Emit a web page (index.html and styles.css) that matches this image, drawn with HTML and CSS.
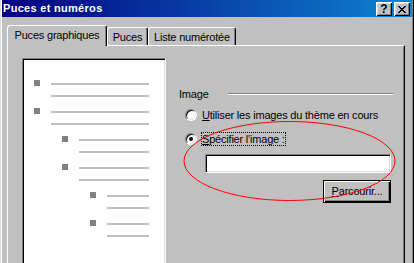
FILE: index.html
```html
<!DOCTYPE html>
<html lang="fr">

<head>
    <meta charset="UTF-8">
    <meta name="viewport" content="width=device-width, initial-scale=1.0">
    <title>Puces et numéros</title>
    <link rel="stylesheet" href="styles.css">
</head>

<body>
    <div class="window">
        <div class="titlebar">
            <span class="title">Puces et numéros</span>
            <div class="title-buttons">
                <button class="title-btn">?</button>
                <button class="title-btn">
                    <svg width="8" height="7" viewBox="0 0 8 7" shape-rendering="crispEdges">
                        <path fill="#000" d="M0 0h2v1H0z M6 0h2v1H6z M1 1h2v1H1z M5 1h2v1H5z M2 2h4v1H2z M3 3h2v1H3z M2 4h4v1H2z M1 5h2v1H1z M5 5h2v1H5z M0 6h2v1H0z M6 6h2v1H6z" />
                    </svg>
                </button>
            </div>
        </div>

        <div class="tabs">
            <div class="tab active">Puces graphiques</div>
            <div class="tab tab-puces">Puces</div>
            <div class="tab tab-liste">Liste numérotée</div>
        </div>

        <div class="panel">
            <!-- bullet preview -->
            <div class="preview">
                <div class="item level-0"><span class="bullet"></span><div class="lines"><div class="line"></div><div class="line"></div></div></div>
                <div class="item level-0"><span class="bullet"></span><div class="lines"><div class="line"></div><div class="line"></div></div></div>
                <div class="item level-1"><span class="bullet"></span><div class="lines"><div class="line"></div><div class="line"></div></div></div>
                <div class="item level-1"><span class="bullet"></span><div class="lines"><div class="line"></div><div class="line"></div></div></div>
                <div class="item level-2"><span class="bullet"></span><div class="lines"><div class="line"></div><div class="line"></div></div></div>
                <div class="item level-2"><span class="bullet"></span><div class="lines"><div class="line"></div><div class="line"></div></div></div>
            </div>

            <div class="options">
                <div class="group-header">
                    <span>Image</span>
                    <div class="etched"></div>
                </div>
                <label class="radio-row">
                    <span class="radio"></span>
                    <span class="radio-label"><u>U</u>tiliser les images du thème en cours</span>
                </label>
                <label class="radio-row second">
                    <span class="radio checked"></span>
                    <span class="radio-label focused"><u>S</u>pécifier l'image :</span>
                </label>
                <input class="path-input" type="text">
                <button class="browse-btn"><u>P</u>arcourir...</button>
            </div>
        </div>

        <!-- red hand drawn circle -->
        <svg class="annotation" width="414" height="263" viewBox="0 0 414 263">
            <ellipse cx="289.5" cy="161" rx="105.5" ry="39.5" fill="none" stroke="#ff0000" stroke-width="1" />
        </svg>
    </div>
</body>

</html>
```

FILE: styles.css
```css
body {
    margin: 0;
    background-color: #c0c0c0;
    font-family: "Liberation Sans", Arial, sans-serif;
    font-size: 11px;
    letter-spacing: -0.2px;
    color: #000;
}

.window {
    position: relative;
    width: 414px;
    height: 263px;
    box-sizing: border-box;
    overflow: hidden;
    background-color: #c0c0c0;
    border-left: 1px solid #dfdfdf;
    border-right: 1px solid #000;
    padding: 0 1px;
    box-shadow: inset 1px 0 #fff, inset -1px 0 #808080;
}

.titlebar {
    display: flex;
    height: 17px;
    background: linear-gradient(to right, #000080, #1084d0);
}

.title {
    padding-left: 1px;
    line-height: 17px;
    font-weight: bold;
    letter-spacing: 0.3px;
    color: #fff;
}

.title-buttons {
    display: flex;
    gap: 2px;
    margin-left: auto;
    padding: 2px 2px 0 0;
}

.title-btn {
    display: flex;
    align-items: center;
    justify-content: center;
    width: 16px;
    height: 14px;
    padding: 0;
    border: none;
    background-color: #c0c0c0;
    box-shadow: inset 1px 1px #fff, inset -1px -1px #000, inset 2px 2px #dfdfdf, inset -2px -2px #808080;
    font-family: "Liberation Sans", Arial, sans-serif;
    font-size: 12px;
    font-weight: bold;
    line-height: 14px;
    color: #000;
}

/* tabs */

.tabs {
    display: flex;
    align-items: flex-end;
    height: 20px;
    margin: 8px 0 0 5px;
}

.tab {
    box-sizing: border-box;
    height: 18px;
    padding-top: 3px;
    line-height: 13px;
    text-align: center;
    background-color: #c0c0c0;
    border-top: 1px solid #fff;
    border-left: 1px solid #fff;
    border-right: 1px solid #000;
    border-radius: 3px 3px 0 0;
    box-shadow: inset -1px 0 #808080;
}

.tab.active {
    position: relative;
    z-index: 1;
    width: 100px;
    height: 21px;
    margin-bottom: -1px;
}

.tab-puces {
    width: 41px;
}

.tab-liste {
    width: 88px;
}

.panel {
    display: flex;
    align-items: flex-start;
    box-sizing: border-box;
    width: 398px;
    height: 230px;
    margin-left: 5px;
    border-top: 1px solid #fff;
    border-left: 1px solid #fff;
    border-right: 1px solid #000;
    box-shadow: inset -1px 0 #808080;
}

/* preview box */

.preview {
    box-sizing: border-box;
    width: 144px;
    height: 220px;
    margin: 12px 0 0 14px;
    padding-top: 21px;
    background-color: #fff;
    border: 1px solid;
    border-color: #808080 #fff #fff #808080;
    box-shadow: inset 1px 1px #000, inset -1px -1px #dfdfdf;
}

.item {
    display: flex;
    height: 28px;
    padding-right: 16px;
}

.level-0 {
    padding-left: 11px;
}

.level-1 {
    padding-left: 39px;
}

.level-2 {
    padding-left: 67px;
}

.bullet {
    flex-shrink: 0;
    width: 6px;
    height: 6px;
    margin-right: 11px;
    background-color: #808080;
}

.lines {
    flex: 1;
}

.line {
    height: 2px;
    margin-top: 3px;
    background-color: #c0c0c0;
}

.line + .line {
    margin-top: 10px;
}

/* right side */

.options {
    flex: 1;
    display: flex;
    flex-direction: column;
    padding-top: 42px;
}

.group-header {
    display: flex;
    padding-left: 13px;
    line-height: 13px;
}

.etched {
    flex: 1;
    box-sizing: border-box;
    height: 2px;
    margin: 5px 11px 0 19px;
    border-top: 1px solid #808080;
    border-bottom: 1px solid #fff;
}

.radio-row {
    display: flex;
    align-items: center;
    margin-top: 7px;
    padding-left: 19px;
}

.radio-row.second {
    margin-top: 10px;
}

.radio {
    display: flex;
    align-items: center;
    justify-content: center;
    box-sizing: border-box;
    width: 12px;
    height: 12px;
    border-radius: 50%;
    background-color: #fff;
    border: 1px solid;
    border-color: #808080 #fff #fff #808080;
    box-shadow: inset 1px 1px #000, inset -1px -1px #dfdfdf;
}

.radio.checked::after {
    content: "";
    width: 4px;
    height: 4px;
    border-radius: 50%;
    background-color: #000;
}

.radio-label {
    margin-left: 4px;
    line-height: 12px;
    border: 1px dotted transparent;
}

.radio-label.focused {
    border-color: #000;
}

.path-input {
    align-self: flex-start;
    box-sizing: border-box;
    width: 186px;
    height: 19px;
    margin: 8px 0 0 39px;
    padding: 0;
    background-color: #fff;
    border: 1px solid;
    border-color: #808080 #fff #fff #808080;
    box-shadow: inset 1px 1px #000, inset -1px -1px #dfdfdf;
}

.browse-btn {
    align-self: flex-end;
    box-sizing: border-box;
    width: 68px;
    height: 23px;
    margin: 7px 13px 0 0;
    padding: 0;
    background-color: #c0c0c0;
    border: 1px solid #000;
    box-shadow: inset 1px 1px #fff, inset -1px -1px #000, inset -2px -2px #808080;
    font-family: "Liberation Sans", Arial, sans-serif;
    font-size: 11px;
    letter-spacing: -0.2px;
    line-height: 13px;
    color: #000;
}

.annotation {
    position: absolute;
    left: -1px;
    top: 0;
    pointer-events: none;
}
```
